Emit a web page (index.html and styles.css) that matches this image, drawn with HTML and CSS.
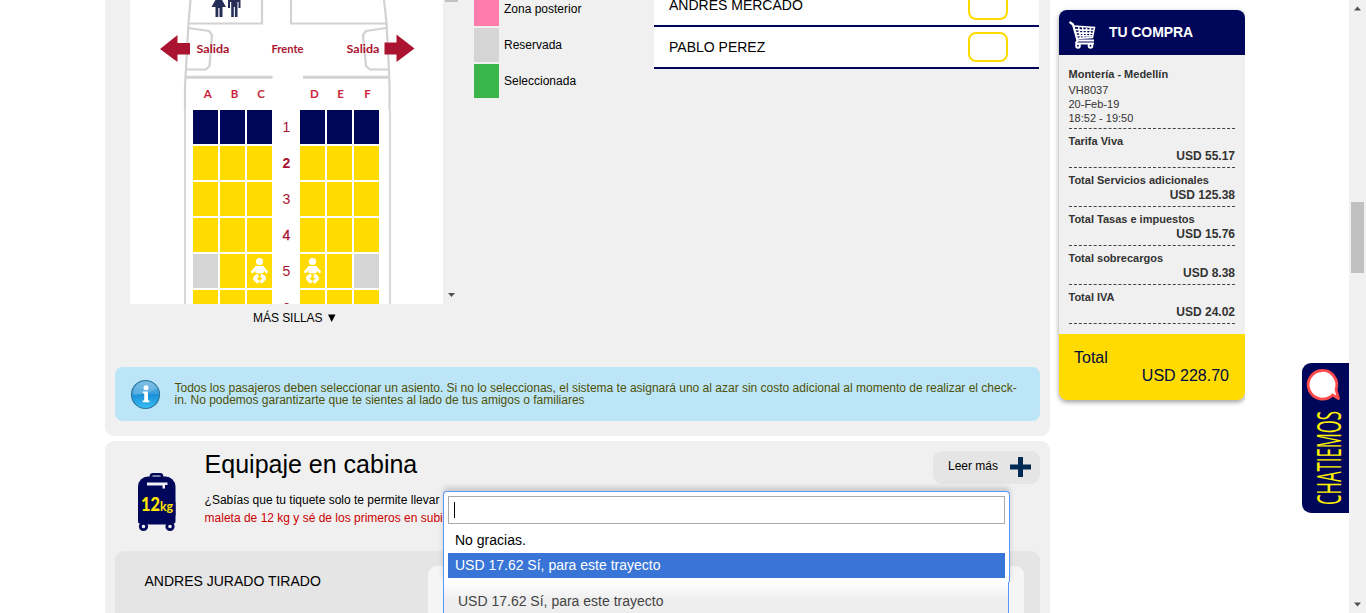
FILE: index.html
```html
<!DOCTYPE html>
<html lang="es">
<head>
<meta charset="utf-8">
<title>Selecciona tus servicios</title>
<link rel="stylesheet" href="styles.css">
</head>
<body>
<div class="page">
  <main class="content">
    <section class="panel seats-panel">
      <div class="seats-top">
        <div class="plane-col">
          <div class="plane">
            <svg class="plane-head" width="313" height="110" viewBox="130 0 313 110">
              <g fill="none" stroke="#d2d2d2" stroke-width="2.2">
                <path d="M190.500 0L188.500 23L186.500 60L185 85V110M384 0L386.500 23L388.500 60L389.500 85V110"/>
                <path d="M188 23.500H262V0M291 0V23.500H387"/>
                <path d="M188 28L209 31L212 35L209.500 66L206 69.500H186M386 28L366 31L363 35L366 66L370 69.500H389"/>
                <path stroke-width="3" d="M186 77.300H272.500M303 77.300H389"/>
              </g>
              <g fill="#ab1430">
                <path d="M160 49L177.500 35V43H190V54.500H177.500V62ZM414.500 48.500L396.500 34.500V42.500H384.500V54.500H396.500V62Z"/>
              </g>
              <g fill="#252e57">
                <path d="M215.500 0H222L226 7H222.500V17H219.500V8H218.300V17H215.500V7H211.500ZM228 0H240.500V8H238.500V2H237.500V17H234.900V7H233.800V17H231.200V2H230V8H228Z"/>
              </g>
              <g class="plane-text" fill="#ab1430">
                <text x="196.500" y="52.500" textLength="33" lengthAdjust="spacingAndGlyphs">Salida</text>
                <text x="271.500" y="52.500" textLength="32" lengthAdjust="spacingAndGlyphs">Frente</text>
                <text x="346.500" y="52.500" textLength="33" lengthAdjust="spacingAndGlyphs">Salida</text>
              </g>
              <g class="plane-text" fill="#cc1f3c" text-anchor="middle">
                <text x="207.700" y="98">A</text><text x="234.500" y="98">B</text><text x="261" y="98">C</text>
                <text x="314.300" y="98">D</text><text x="340.500" y="98">E</text><text x="367.500" y="98">F</text>
              </g>
            </svg>
            <div class="seat-grid">
              <i class="s vip"></i><i class="s vip"></i><i class="s vip"></i><b>1</b><i class="s vip"></i><i class="s vip"></i><i class="s vip"></i>
              <i class="s"></i><i class="s"></i><i class="s"></i><b class="strong">2</b><i class="s"></i><i class="s"></i><i class="s"></i>
              <i class="s"></i><i class="s"></i><i class="s"></i><b>3</b><i class="s"></i><i class="s"></i><i class="s"></i>
              <i class="s"></i><i class="s"></i><i class="s"></i><b class="semi">4</b><i class="s"></i><i class="s"></i><i class="s"></i>
              <i class="s res"></i><i class="s"></i>
              <i class="s"><svg width="25" height="34" viewBox="0 0 25 34"><g id="baby" fill="none" stroke="#fff" stroke-linecap="round"><circle cx="12.500" cy="7.500" r="3.600" fill="#fff" stroke="none"/><path d="M8.500 12H16.500L17 18.500Q12.500 20.500 8 18.500Z" fill="#fff" stroke="none"/><path stroke-width="2.600" d="M9 13.500L5.300 17.800M16 13.500L19.700 17.800"/><path stroke-width="3.400" stroke-linecap="butt" d="M11.300 21.500Q7.500 22.500 7.800 25L11.500 28.500M13.700 21.500Q17.500 22.500 17.200 25L13.500 28.500"/></g></svg></i>
              <b>5</b>
              <i class="s"><svg width="25" height="34" viewBox="0 0 25 34"><use href="#baby"/></svg></i>
              <i class="s"></i><i class="s res"></i>
              <i class="s"></i><i class="s"></i><i class="s"></i><b class="last">6</b><i class="s"></i><i class="s"></i><i class="s"></i>
            </div>
          </div>
          <div class="more-seats">MÁS SILLAS <svg width="8" height="8" viewBox="0 0 8 8"><path d="M0 .5H7.500L3.700 8Z"/></svg></div>
        </div>
        <div class="inner-scroll"><i></i><svg width="7" height="4" viewBox="0 0 7 4"><path d="M0 0H7L3.500 4Z" fill="#505050"/></svg></div>
        <ul class="legend">
          <li><i class="pink"></i>Zona posterior</li>
          <li><i class="gray"></i>Reservada</li>
          <li><i class="green"></i>Seleccionada</li>
        </ul>
        <div class="passengers">
          <div class="pax"><span>ANDRES MERCADO</span><i></i></div>
          <div class="pax"><span>PABLO PEREZ</span><i></i></div>
        </div>
      </div>
      <div class="info">
        <svg width="32" height="32" viewBox="0 0 32 32">
          <defs><linearGradient id="blue" x1="0" y1="0" x2="0" y2="1"><stop offset="0" stop-color="#67b5e2"/><stop offset=".48" stop-color="#3a9edb"/><stop offset=".5" stop-color="#1b8fd6"/><stop offset="1" stop-color="#36bff5"/></linearGradient></defs>
          <circle cx="15.500" cy="15.500" r="14" fill="url(#blue)" stroke="#31789c" stroke-width="1.200"/>
          <path d="M3 16Q16 16 28 9Q24 2.500 15.500 2.500Q4 3 3 16" fill="#fff" opacity=".16"/>
          <circle cx="16" cy="8.700" r="2.500" fill="#fff"/>
          <path d="M12.700 12.500H18V21.500H19.500V23.300H12.500V21.500H14.200V14.300H12.700Z" fill="#fff"/>
        </svg>
        <p>Todos los pasajeros deben seleccionar un asiento. Si no lo seleccionas, el sistema te asignará uno al azar sin costo adicional al momento de realizar el check-<br>in. No podemos garantizarte que te sientes al lado de tus amigos o familiares</p>
      </div>
    </section>

    <section class="panel bags-panel">
      <div class="bags-head">
        <svg class="bag" width="40" height="60" viewBox="0 0 40 60">
          <path d="M14 6V4Q14 2.200 16 2.200H23Q25 2.200 25 4V6" fill="none" stroke="#000659" stroke-width="2.600"/>
          <rect x="1" y="4.500" width="37.500" height="48" rx="10" fill="#000659"/>
          <path d="M1 30H38.500V49Q38.500 52 35.500 52H4Q1 52 1 49Z" fill="#000659"/>
          <circle cx="6.500" cy="54.500" r="3.200" fill="#f0f0f0" stroke="#000659" stroke-width="2.800"/>
          <circle cx="33" cy="54.500" r="3.200" fill="#f0f0f0" stroke="#000659" stroke-width="2.800"/>
          <path d="M10 10.500H30.500V13H28V16.500H25.500V13.500H10Z" fill="#f3f0fa"/>
          <text class="bag-num" x="4" y="38.500" textLength="19" lengthAdjust="spacingAndGlyphs">12</text>
          <text class="bag-kg" x="23" y="38.500" textLength="13" lengthAdjust="spacingAndGlyphs">kg</text>
        </svg>
        <div class="bags-copy">
          <h2>Equipaje en cabina</h2>
          <p>¿Sabías que tu tiquete solo te permite llevar</p>
          <p class="red">maleta de 12 kg y sé de los primeros en subi</p>
        </div>
        <div class="read-more"><span>Leer más</span><svg width="21" height="20" viewBox="0 0 21 20"><path d="M8 0H13V7.500H21V12.500H13V20H8V12.500H0V7.500H8Z" fill="#002b54"/></svg></div>
      </div>
      <div class="bag-row"><span>ANDRES JURADO TIRADO</span><div class="bag-choice"></div></div>
      <div class="dropdown">
        <div class="options">
          <div class="search"><i></i></div>
          <div class="option">No gracias.</div>
          <div class="option active">USD 17.62 Sí, para este trayecto</div>
        </div>
        <div class="chosen">USD 17.62 Sí, para este trayecto</div>
      </div>
    </section>
  </main>

  <aside class="cart">
    <header>
      <svg width="28" height="28" viewBox="0 0 28 28" fill="none" stroke="#fff">
        <path stroke-width="2.200" d="M.5 1L4 3.500L8.500 19.500H25"/>
        <path stroke-width="1.500" d="M4.500 5L25.500 6.500L23.500 16.500L8.500 17.500M5.500 8.500L25 9.500M6.500 11.500L24.500 12.500M7.500 14.500L24 15M9.500 5.500L11.500 17M13.500 5.500L14.500 17M17.500 6L17.500 17M21.500 6L20.500 17"/>
        <path stroke-width="1.800" d="M6.500 22.500H25M8.500 19.500L6.500 22.500"/>
        <circle cx="9" cy="24.800" r="1.900" stroke-width="1.900"/><circle cx="21.500" cy="24.800" r="1.900" stroke-width="1.900"/>
      </svg>
      <span>TU COMPRA</span>
    </header>
    <div class="cart-body">
      <div class="trip"><strong>Montería - Medellín</strong><span>VH8037</span><span>20-Feb-19</span><span>18:52 - 19:50</span></div>
      <div class="line"><span>Tarifa Viva</span><b>USD 55.17</b></div>
      <div class="line"><span>Total Servicios adicionales</span><b>USD 125.38</b></div>
      <div class="line"><span>Total Tasas e impuestos</span><b>USD 15.76</b></div>
      <div class="line"><span>Total sobrecargos</span><b>USD 8.38</b></div>
      <div class="line"><span>Total IVA</span><b>USD 24.02</b></div>
    </div>
    <footer><span>Total</span><b>USD 228.70</b></footer>
  </aside>
</div>

<div class="chat">
  <svg width="47" height="150" viewBox="0 0 47 150">
    <path d="M30.500 32A14.300 14.300 0 1 1 34 26.500L36.500 35.500Z" fill="#fff" stroke="#ff4b4b" stroke-width="2.800" stroke-linejoin="round"/>
    <text class="chat-text" transform="translate(38.500 142) rotate(-90)" textLength="94" lengthAdjust="spacingAndGlyphs">CHATIEMOS</text>
  </svg>
</div>
<div class="scrollbar">
  <svg width="17" height="17" viewBox="0 0 17 17"><path d="M5 10.500L8.500 6.500L12 10.500Z" fill="#505050"/></svg>
  <i></i>
  <svg class="down" width="17" height="17" viewBox="0 0 17 17"><path d="M5 6.500H12L8.500 10.500Z" fill="#505050"/></svg>
</div>
</body>
</html>
```
FILE: styles.css
```css
* { box-sizing: border-box; }
html, body { height: 100%; overflow: hidden; }
body { margin: 0; background: #fff; color: #000; font: 12px/14px "Liberation Sans", Arial, sans-serif; }
i { display: block; font-style: normal; }
p, h2, ul { margin: 0; padding: 0; font-weight: normal; }
svg { display: block; flex: none; }

.page { display: flex; gap: 9px; width: 1140px; height: 613px; margin-left: 105px; overflow: hidden; align-items: flex-start; }
.content { width: 945px; display: flex; flex-direction: column; gap: 5px; }
.panel { background: #f0f0f0; }

.seats-panel { height: 436px; padding: 0 10px; border-radius: 0 0 9px 9px; display: flex; flex-direction: column; }
.seats-top { display: flex; height: 367px; padding-left: 15px; }
.plane-col { width: 313px; }
.plane { height: 304px; overflow: hidden; background: #fff; }
.plane-text { font: bold 11.5px Lato, sans-serif; }
.seat-grid { width: 207px; margin-left: 54px; padding-left: 7px; border: solid #d8d8d8; border-width: 0 2px; display: grid; grid-template-columns: 25px 25px 25px 24px 25px 25px 25px; grid-auto-rows: 34px; gap: 2px; }
.s { background: #ffdb00; }
.vip { background: #000659; }
.res { background: #d5d5d5; }
.seat-grid b { font-weight: normal; font-size: 14px; line-height: 35px; text-align: center; padding-left: 1px; color: #a8122f; }
.seat-grid .strong { font-weight: bold; }
.seat-grid .semi { -webkit-text-stroke: .3px #a8122f; }
.seat-grid .last { line-height: 37px; }
.more-seats { display: flex; align-items: center; gap: 5px; padding: 7px 0 0 123px; white-space: nowrap; letter-spacing: -.05px; }
.inner-scroll { width: 17px; height: 304px; display: flex; flex-direction: column; justify-content: space-between; align-items: center; padding-bottom: 7px; }
.inner-scroll i { width: 13px; height: 2px; background: #c1c1c1; }
.legend { list-style: none; width: 180px; margin-left: 14px; display: flex; flex-direction: column; gap: 2px; margin-top: -8px; }
.legend li { display: flex; align-items: center; gap: 5px; height: 34px; }
.legend i { width: 25px; height: 34px; }
.pink { background: #ff7bac; }
.gray { background: #d5d5d5; }
.green { background: #39b54a; }
.passengers { width: 385px; margin-top: -15px; }
.pax { display: flex; justify-content: space-between; align-items: center; height: 42px; padding: 0 31px 0 15px; background: #fff; border-bottom: 2px solid #000659; font-size: 14px; }
.pax i { width: 40px; height: 30px; border: 2px solid #ffdb00; border-radius: 8px; }
.info { display: flex; gap: 13px; height: 54px; padding: 12px 0 0 15px; background: #bce5f7; border-radius: 8px; color: #4f5109; font-size: 12px; line-height: 12px; }
.info p { padding-top: 3px; margin-left: -.5px; white-space: nowrap; letter-spacing: -.002px; }

.bags-panel { position: relative; height: 190px; padding: 0 10px; border-radius: 9px 9px 0 0; }
.bags-head { display: flex; height: 110px; }
.bag { margin: 31px 0 0 22px; }
.bag-num { font: 900 19px Lato, sans-serif; fill: #ffe600; }
.bag-kg { font: bold 13px Lato, sans-serif; fill: #ffe600; }
.bags-copy { margin-left: 27.6px; width: 728.4px; padding-top: 8px; line-height: 18px; white-space: nowrap; }
.bags-copy h2 { font-size: 25px; line-height: 30px; height: 42px; }
.red { color: #cc0000; }
.read-more { display: flex; align-items: center; justify-content: space-between; width: 107px; height: 33px; margin-top: 10px; padding: 0 9px 2px 15px; border-radius: 9px; background: #e5e5e5; }
.read-more span { padding-bottom: 2px; }
.bag-row { height: 90px; padding: 15px 16px 0 29px; display: flex; justify-content: space-between; background: #e5e5e5; border-radius: 9px; font-size: 14px; line-height: 30px; }
.bag-row span { padding-left: .5px; }
.bag-choice { width: 596px; height: 80px; background: #f5f5f5; border-radius: 9px; }
.dropdown { position: absolute; left: 338px; top: 50px; width: 567px; font-size: 14px; }
.options { height: 91px; padding: 4px 4px 0; background: #fff; border: 1px solid #5897fb; border-bottom: 0; border-radius: 4px 4px 0 0; box-shadow: 0 -4px 5px rgba(0,0,0,.15); }
.search { height: 28px; border: 1px solid #aaa; padding: 5px; margin-bottom: 4px; }
.search i { width: 1px; height: 16px; background: #000; }
.option { height: 25px; padding-left: 7px; line-height: 25px; }
.active { background: #3875d7; color: #fff; }
.chosen { width: 566px; height: 60px; padding-left: 14px; border: solid #5897fb; border-width: 0 1px; line-height: 39px; color: #444; background: linear-gradient(#fff 0, #eee 18px); }

.cart { width: 186px; height: 390px; margin-top: 10px; border-radius: 8px; overflow: hidden; background: #f0f0f0; box-shadow: 0 2px 5px rgba(0,0,0,.4); color: #333; font-size: 11px; }
.cart header { height: 45px; padding: 11px 10px; display: flex; gap: 12px; background: #000659; color: #fff; font-size: 14px; font-weight: bold; line-height: 22px; letter-spacing: -.08px; }
.cart-body { height: 279px; padding: 12px 10px 0 9.5px; }
.trip { display: flex; flex-direction: column; height: 62px; border-bottom: 1px dashed #444; }
.trip strong { height: 16px; }
.line { height: 39px; padding-top: 5px; border-bottom: 1px dashed #444; display: flex; flex-direction: column; font-weight: bold; }
.line b { align-self: flex-end; font-size: 12px; padding-top: 1px; }
.cart footer { height: 66px; padding: 15px 16px 0 15px; display: flex; flex-direction: column; background: #ffdb00; color: #000b3f; font-size: 16px; line-height: 18px; }
.cart footer b { align-self: flex-end; font-weight: normal; }

.chat { position: absolute; right: 17px; top: 363px; width: 47px; height: 150px; background: #000659; border-radius: 9px 0 0 9px; }
.chat-text { font: 500 33px "Open Sans", sans-serif; fill: #fff200; }
.scrollbar { position: absolute; right: 0; top: 0; width: 17px; height: 613px; background: #f1f1f1; display: flex; flex-direction: column; }
.scrollbar i { width: 13px; height: 71px; margin: 185px 0 0 2px; background: #c1c1c1; }
.scrollbar .down { margin-top: auto; }
```
